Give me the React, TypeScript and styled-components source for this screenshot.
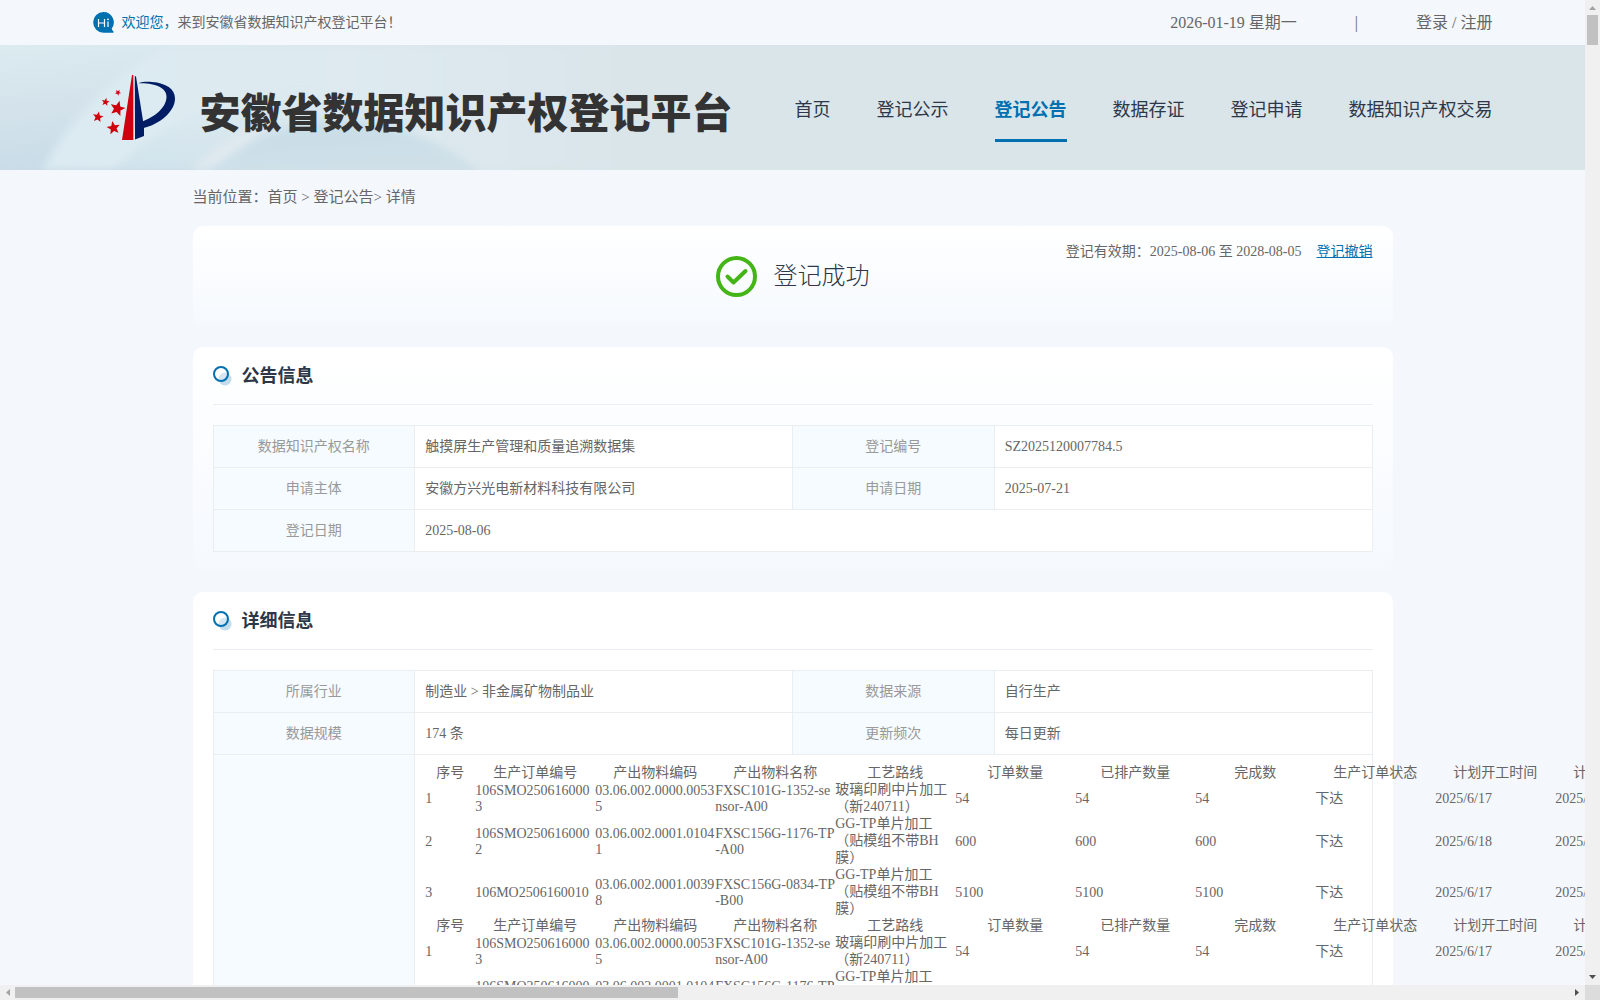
import React from 'react';
import styled, { createGlobalStyle } from 'styled-components';

const serif = `'Liberation Serif', 'Noto Sans CJK SC', serif`;

const GlobalStyle = createGlobalStyle`
  * {
    box-sizing: border-box;
  }
  body {
    margin: 0;
    background: #f4f7fc;
    color: #666;
    font-family: ${serif};
    font-size: 14px;
  }
  a {
    color: inherit;
    text-decoration: none;
  }
`;

const Shell = styled.div`
  display: grid;
  grid-template-columns: minmax(0, 1fr) 15px;
  grid-template-rows: minmax(0, 1fr) 15px;
  height: 100vh;
`;

const Page = styled.div`
  overflow: auto;
  scrollbar-width: none;
`;

const Wide = styled.div`
  display: flex;
  align-items: center;
  justify-content: space-between;
  max-width: 1400px;
  height: 100%;
  margin: 0 auto;
`;

const TopBar = styled.div`
  height: 45px;
`;

const Welcome = styled.p`
  display: flex;
  align-items: center;
  gap: 8px;
  margin: 0;
  line-height: 20px;

  em {
    color: #0070b1;
    font-style: normal;
  }
`;

const Account = styled.div`
  display: flex;
  align-items: center;
  gap: 58px;
  font-size: 16px;
  line-height: 20px;
`;

const Header = styled.header`
  position: relative;
  height: 125px;
  background: #dae5ea;
`;

const HeaderArt = styled.svg`
  position: absolute;
  top: 0;
  left: 0;
  width: 650px;
  height: 100%;
`;

const HeaderInner = styled(Wide)`
  position: relative;
`;

const Brand = styled.a`
  display: flex;
  align-items: center;
  gap: 24px;
`;

const BrandName = styled.h1`
  margin: 0;
  padding-top: 4px;
  color: #333;
  font-family: 'Noto Sans CJK SC', sans-serif;
  font-size: 41px;
  font-weight: 900;
  line-height: 48px;
  white-space: nowrap;
`;

const Nav = styled.nav`
  display: flex;
  gap: 46px;
  padding-top: 8px;
`;

const NavLink = styled.a<{ $active?: boolean }>`
  padding: 16px 0;
  border-bottom: 3px solid ${({ $active }) => ($active ? '#0070b1' : 'transparent')};
  color: ${({ $active }) => ($active ? '#0070b1' : '#2d3748')};
  font-size: 18px;
  font-weight: ${({ $active }) => ($active ? 700 : 400)};
  line-height: 26px;
  white-space: nowrap;
`;

const Main = styled.main`
  max-width: 1200px;
  margin: 0 auto;
`;

const Breadcrumb = styled.nav`
  height: 56px;
  font-size: 15px;
  line-height: 54px;
`;

const Card = styled.section<{ $plain?: boolean }>`
  margin-bottom: 20px;
  padding: 0 20px 20px;
  border-radius: 10px;
  background: ${({ $plain }) => ($plain ? '#fff' : 'linear-gradient(#fff, #f5f9fe)')};
`;

const StatusCard = styled(Card)`
  display: grid;
  grid-template-columns: 1fr auto 1fr;
  align-items: start;
  min-height: 101px;
`;

const Status = styled.div`
  display: flex;
  grid-column: 2;
  align-items: center;
  gap: 17px;
  padding-top: 30px;
  color: #2d3748;
  font-size: 24px;
  font-weight: 300;
  line-height: 41px;
`;

const Validity = styled.div`
  display: flex;
  justify-content: flex-end;
  gap: 15px;
  padding-top: 16px;
  line-height: 20px;
  white-space: nowrap;

  a {
    color: #0070b1;
    text-decoration: underline;
  }
`;

const CardTitle = styled.h2`
  display: flex;
  align-items: center;
  gap: 10px;
  height: 58px;
  margin: 0 0 20px;
  border-bottom: 1px solid #ebeef2;
  color: #2d3748;
  font-size: 18px;
  line-height: 26px;
`;

const InfoTable = styled.table`
  width: 100%;
  border-collapse: collapse;
  table-layout: fixed;
`;

const LabelCell = styled.th`
  width: 17.4%;
  height: 42px;
  padding: 0 10px;
  border: 1px solid #ebeef0;
  background: #f5fbff;
  color: #999;
  font-weight: 400;
  line-height: 20px;
`;

const ValueCell = styled.td`
  padding: 0 10px;
  border: 1px solid #ebeef0;
  background: #fff;
  line-height: 20px;
`;

const SampleCell = styled(ValueCell)`
  padding: 9px 10px;
`;

const SampleTable = styled.table`
  width: 1250px;
  border-spacing: 0;
  table-layout: fixed;
  word-break: break-all;

  th,
  td {
    width: 120px;
    padding: 0;
    line-height: 17px;
  }
  th {
    font-weight: 400;
  }
  th:first-child {
    width: 50px;
  }
  td:not(:nth-child(5)) {
    padding-top: 2px;
    line-height: 16px;
  }
`;

const BarTrack = styled.div<{ $vertical?: boolean }>`
  display: flex;
  flex-direction: ${({ $vertical }) => ($vertical ? 'column' : 'row')};
  align-items: center;
  justify-content: space-between;
  background: #f0f0f0;
`;

const BarThumb = styled.div<{ $vertical?: boolean }>`
  flex: none;
  width: ${({ $vertical }) => ($vertical ? '11px' : '41.8%')};
  height: ${({ $vertical }) => ($vertical ? '30px' : '11px')};
  background: #c1c1c1;
`;

const BarSpace = styled.div`
  flex: 1;
`;

const BarCorner = styled.div`
  background: #dcdcdc;
`;

const HiIcon = () => (
  <svg width="21" height="21" viewBox="0 0 21 21" aria-hidden="true">
    <path
      d="M10.500 0a10.300 10.300 0 0 1 8.200 16.500q.6 2.200 2 3.200.2.900-.8 1h-9.400a10.350 10.350 0 0 1 0-20.700z"
      fill="#0070b1"
    />
    <path d="M5.500 7v8M11.500 7v8M5.500 11h6M15 9.500V15" stroke="#fff" strokeWidth="1.200" fill="none" />
    <circle cx="15" cy="7.300" r=".9" fill="#fff" />
  </svg>
);

const star = 'M0-1 .26-.34.95-.31.42.14.59.81 0 .45-.59.81-.42.14-.95-.31-.26-.34z';

const stars = [
  { x: 25, y: 17.5, size: 3.2, turn: 30 },
  { x: 12.5, y: 27, size: 4.2, turn: 10 },
  { x: 24.5, y: 33.5, size: 8, turn: 15 },
  { x: 5, y: 42, size: 5.6, turn: 10 },
  { x: 20.5, y: 53, size: 7, turn: -10 },
];

const BrandMark = () => (
  <svg width="83" height="66" viewBox="0 0 83 66" aria-hidden="true">
    {stars.map(s => (
      <path key={s.x} d={star} fill="#d0000c" transform={`translate(${s.x} ${s.y}) rotate(${s.turn}) scale(${s.size})`} />
    ))}
    <path d="M39 0h1.300v65H29z" fill="#d0000c" />
    <path d="M41.800 1 43 1.500 51 52v9L42 64.500z" fill="#001c64" />
    <path d="M45.500 8.200C49 6.800 54 6.600 59 7c14 1 23 7 23 16.500C82 37 66 49.500 50.500 53l-1-6.500C61 42 73.500 33 73.500 21.500 73.500 12.500 62 7.600 45.500 8.200z" fill="#001c64" />
  </svg>
);

const CheckIcon = () => (
  <svg width="41" height="41" viewBox="0 0 41 41" fill="none" stroke="#44b516" aria-hidden="true">
    <circle cx="20.500" cy="20.500" r="18.500" strokeWidth="4" />
    <path d="m11.500 20.500 6 6L29.500 15" strokeWidth="4" strokeLinecap="round" strokeLinejoin="round" />
  </svg>
);

const RingIcon = () => (
  <svg width="19" height="20" viewBox="0 0 19 20" aria-hidden="true">
    <circle cx="12" cy="13" r="6.500" fill="#c3dcec" />
    <circle cx="8" cy="8" r="7" fill="#fff" fillOpacity=".3" stroke="#0070b1" strokeWidth="2" />
  </svg>
);

const Arrow = ({ d, dim }: { d: string; dim?: boolean }) => (
  <svg width="15" height="15" viewBox="0 0 15 15" aria-hidden="true">
    <path d={d} fill={dim ? '#a3a3a3' : '#505050'} />
  </svg>
);

const navItems = ['首页', '登记公示', '登记公告', '数据存证', '登记申请', '数据知识产权交易'];

const columns = [
  '序号',
  '生产订单编号',
  '产出物料编码',
  '产出物料名称',
  '工艺路线',
  '订单数量',
  '已排产数量',
  '完成数',
  '生产订单状态',
  '计划开工时间',
  '计划完工时间',
];

const orders = [
  ['1', '106SMO2506160003', '03.06.002.0000.00535', 'FXSC101G-1352-sensor-A00', '玻璃印刷中片加工（新240711）', '54', '54', '54', '下达', '2025/6/17', '2025/6/17'],
  ['2', '106SMO2506160002', '03.06.002.0001.01041', 'FXSC156G-1176-TP-A00', 'GG-TP单片加工（贴模组不带BH膜）', '600', '600', '600', '下达', '2025/6/18', '2025/6/18'],
  ['3', '106MO2506160010', '03.06.002.0001.00398', 'FXSC156G-0834-TP-B00', 'GG-TP单片加工（贴模组不带BH膜）', '5100', '5100', '5100', '下达', '2025/6/17', '2025/6/17'],
];

const OrderRows = () => (
  <tbody>
    <tr>
      {columns.map(name => (
        <th key={name} scope="col">{name}</th>
      ))}
    </tr>
    {orders.map(row => (
      <tr key={row[0]}>
        {row.map((value, i) => (
          <td key={columns[i]}>{value}</td>
        ))}
      </tr>
    ))}
  </tbody>
);

export default function App() {
  return (
    <Shell>
      <GlobalStyle />
      <Page>
        <TopBar>
          <Wide>
            <Welcome>
              <HiIcon />
              <span>
                <em>欢迎您，</em>来到安徽省数据知识产权登记平台！
              </span>
            </Welcome>
            <Account>
              <span>2026-01-19 星期一</span>
              <span>|</span>
              <span>
                <a href="#login">登录</a> / <a href="#register">注册</a>
              </span>
            </Account>
          </Wide>
        </TopBar>

        <Header>
          <HeaderArt viewBox="0 0 650 125" preserveAspectRatio="none" aria-hidden="true">
            <defs>
              <linearGradient id="corner" x1="0" y1="0" x2=".25" y2="1">
                <stop offset="0" stopColor="#dcebf0" />
                <stop offset=".5" stopColor="#d4e3eb" />
                <stop offset="1" stopColor="#c8dbe8" />
              </linearGradient>
              <linearGradient id="sweep">
                <stop offset="0" stopColor="#dcebf2" />
                <stop offset=".5" stopColor="#deeaf0" />
                <stop offset="1" stopColor="#dae5ea" />
              </linearGradient>
              <linearGradient id="shade" x1="0" y1="0" x2="0" y2="1">
                <stop offset="0" stopColor="#cfe1ea" stopOpacity="0" />
                <stop offset="1" stopColor="#c9dde7" />
              </linearGradient>
              <linearGradient id="hill" x1="0" y1="0" x2=".3" y2="1">
                <stop offset="0" stopColor="#c8dde7" />
                <stop offset="1" stopColor="#cfe0e8" />
              </linearGradient>
              <filter id="soft" x="-10%" y="-20%" width="120%" height="140%">
                <feGaussianBlur stdDeviation="4" />
              </filter>
            </defs>
            <path d="M0 0h300v125H0z" fill="url(#corner)" />
            <path d="M42 125Q85 45 170 0h480v125z" fill="url(#sweep)" filter="url(#soft)" />
            <path d="M110 130Q170 60 300 40 380 50 420 80L250 130z" fill="url(#shade)" filter="url(#soft)" opacity=".6" />
            <path d="M190 125Q225 92 265 78l-15 20-45 27z" fill="#e0e9ef" filter="url(#soft)" />
            <path d="M215 130Q250 84 330 74 425 78 482 130z" fill="url(#hill)" filter="url(#soft)" />
            <path d="M611 0h39v125h-39z" fill="#dae5ea" />
          </HeaderArt>
          <HeaderInner>
            <Brand href="#home">
              <BrandMark />
              <BrandName>安徽省数据知识产权登记平台</BrandName>
            </Brand>
            <Nav>
              {navItems.map(item => (
                <NavLink key={item} href="#nav" $active={item === '登记公告'}>
                  {item}
                </NavLink>
              ))}
            </Nav>
          </HeaderInner>
        </Header>

        <Main>
          <Breadcrumb>
            当前位置：<a href="#home">首页</a> &gt; <a href="#notice">登记公告</a>&gt; 详情
          </Breadcrumb>

          <StatusCard>
            <Status>
              <CheckIcon />
              登记成功
            </Status>
            <Validity>
              <span>登记有效期：2025-08-06 至 2028-08-05</span>
              <a href="#revoke">登记撤销</a>
            </Validity>
          </StatusCard>

          <Card>
            <CardTitle>
              <RingIcon />
              公告信息
            </CardTitle>
            <InfoTable>
              <tbody>
                <tr>
                  <LabelCell scope="row">数据知识产权名称</LabelCell>
                  <ValueCell>触摸屏生产管理和质量追溯数据集</ValueCell>
                  <LabelCell scope="row">登记编号</LabelCell>
                  <ValueCell>SZ2025120007784.5</ValueCell>
                </tr>
                <tr>
                  <LabelCell scope="row">申请主体</LabelCell>
                  <ValueCell>安徽方兴光电新材料科技有限公司</ValueCell>
                  <LabelCell scope="row">申请日期</LabelCell>
                  <ValueCell>2025-07-21</ValueCell>
                </tr>
                <tr>
                  <LabelCell scope="row">登记日期</LabelCell>
                  <ValueCell colSpan={3}>2025-08-06</ValueCell>
                </tr>
              </tbody>
            </InfoTable>
          </Card>

          <Card $plain>
            <CardTitle>
              <RingIcon />
              详细信息
            </CardTitle>
            <InfoTable>
              <tbody>
                <tr>
                  <LabelCell scope="row">所属行业</LabelCell>
                  <ValueCell>制造业 &gt; 非金属矿物制品业</ValueCell>
                  <LabelCell scope="row">数据来源</LabelCell>
                  <ValueCell>自行生产</ValueCell>
                </tr>
                <tr>
                  <LabelCell scope="row">数据规模</LabelCell>
                  <ValueCell>174 条</ValueCell>
                  <LabelCell scope="row">更新频次</LabelCell>
                  <ValueCell>每日更新</ValueCell>
                </tr>
                <tr>
                  <LabelCell />
                  <SampleCell colSpan={3}>
                    <SampleTable>
                      <OrderRows />
                      <OrderRows />
                    </SampleTable>
                  </SampleCell>
                </tr>
              </tbody>
            </InfoTable>
          </Card>
        </Main>
      </Page>

      <BarTrack $vertical>
        <Arrow d="M4 10h7L7.500 6z" dim />
        <BarThumb $vertical />
        <BarSpace />
        <Arrow d="M4 5h7l-3.500 4z" />
      </BarTrack>
      <BarTrack>
        <Arrow d="M10 4v7L6 7.500z" dim />
        <BarThumb />
        <BarSpace />
        <Arrow d="M5 4v7l4-3.500z" />
      </BarTrack>
      <BarCorner />
    </Shell>
  );
}
